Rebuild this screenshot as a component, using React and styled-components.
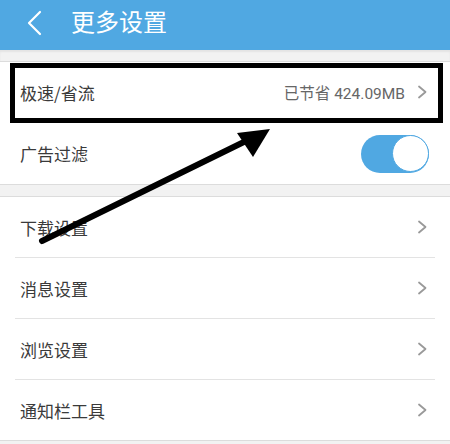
import React from "react";
import styled, { createGlobalStyle } from "styled-components";

const Global = createGlobalStyle`
  html, body { margin: 0; padding: 0; background: #f2f2f2; }
  body { font-family: "Noto Sans CJK SC", "Noto Sans", Roboto, sans-serif; }
  * { box-sizing: border-box; }
`;

const Page = styled.div`
  position: relative;
  width: 450px;
  height: 444px;
  overflow: hidden;
  background: #f2f2f2;
`;

const Header = styled.div`
  height: 50px;
  background: #50a8e2;
  display: flex;
  align-items: flex-start;
  padding: 4px 0 0 26px;
  gap: 27px;
  color: #fff;
`;

const Title = styled.div`
  font-size: 24px;
  line-height: 34px;
  color: #fff;
`;

const BackIcon = styled.svg`
  width: 18px;
  height: 26px;
  margin-top: 6px;
`;

const Gap = styled.div`
  height: ${(p) => p.h}px;
  background: #f2f2f2;
  border-bottom: 1px solid #dcdcdc;
  ${(p) => (p.top ? "border-top: 1px solid #dcdcdc;" : "")}
  ${(p) => (p.shadow ? "box-shadow: inset 0 2px 2px rgba(0,0,0,0.06);" : "")}
`;

const Group = styled.div`
  background: #fff;
`;

const Row = styled.div`
  position: relative;
  height: ${(p) => p.h || 61}px;
  margin: 0 15px;
  padding: 0 8px 0 5px;
  display: flex;
  align-items: center;
  justify-content: space-between;
  border-bottom: ${(p) => (p.last ? "none" : "1px solid #e3e3e3")};
`;

const Label = styled.span`
  font-size: 17px;
  color: #3a3a3a;
`;

const Right = styled.div`
  display: flex;
  align-items: center;
  gap: 12px;
`;

const Value = styled.span`
  font-size: 15.5px;
  color: #666;
  font-family: Roboto, "Noto Sans CJK SC", sans-serif;
`;

const ValueCjk = styled.span`
  font-family: "Noto Sans CJK SC", sans-serif;
`;

const Chevron = styled.svg`
  width: 10px;
  height: 16px;
`;

const Highlight = styled.div`
  position: absolute;
  left: -5px;
  right: -8px;
  top: 1px;
  bottom: -1px;
  border: 5px solid #000;
  pointer-events: none;
`;

const Toggle = styled.div`
  width: 68px;
  height: 38px;
  border-radius: 19px;
  background: #50a8e2;
  display: flex;
  justify-content: flex-end;
  align-items: center;
  margin-right: -2px;
`;

const Knob = styled.div`
  width: 37px;
  height: 37px;
  border-radius: 50%;
  background: #fff;
  border: 1.5px solid #50a8e2;
`;

const ArrowLayer = styled.svg`
  position: absolute;
  left: 0;
  top: 0;
  width: 450px;
  height: 444px;
  pointer-events: none;
`;

const ChevronIcon = () => (
  <Chevron viewBox="0 0 10 16">
    <path d="M2 2.5 L8.5 8 L2 13.5" fill="none" stroke="#999" strokeWidth="1.8" strokeLinecap="round" strokeLinejoin="round" />
  </Chevron>
);

const items = ["下载设置", "消息设置", "浏览设置", "通知栏工具"];

export default function App() {
  return (
    <Page>
      <Global />
      <Header>
        <BackIcon viewBox="0 0 18 26">
          <path d="M14 2 L3 13 L14 24" fill="none" stroke="#fff" strokeWidth="2.2" strokeLinecap="round" strokeLinejoin="round" />
        </BackIcon>
        <Title>更多设置</Title>
      </Header>
      <Gap h={12} shadow />
      <Group>
        <Row h={61}>
          <Label>极速/省流</Label>
          <Right>
            <Value><ValueCjk>已节省</ValueCjk> 424.09MB</Value>
            <ChevronIcon />
          </Right>
          <Highlight />
        </Row>
        <Row h={61} last>
          <Label>广告过滤</Label>
          <Toggle>
            <Knob />
          </Toggle>
        </Row>
      </Group>
      <Gap h={13} top />
      <Group>
        {items.map((t, i) => (
          <Row key={t} h={i === 3 ? 60 : 61} last={i === 3}>
            <Label>{t}</Label>
            <ChevronIcon />
          </Row>
        ))}
      </Group>
      <Gap h={10} top />
      <ArrowLayer viewBox="0 0 450 444">
        <line x1="42" y1="241" x2="252" y2="138" stroke="#000" strokeWidth="6" strokeLinecap="round" />
        <polygon points="270,129 237,133 253,157" fill="#000" />
      </ArrowLayer>
    </Page>
  );
}
